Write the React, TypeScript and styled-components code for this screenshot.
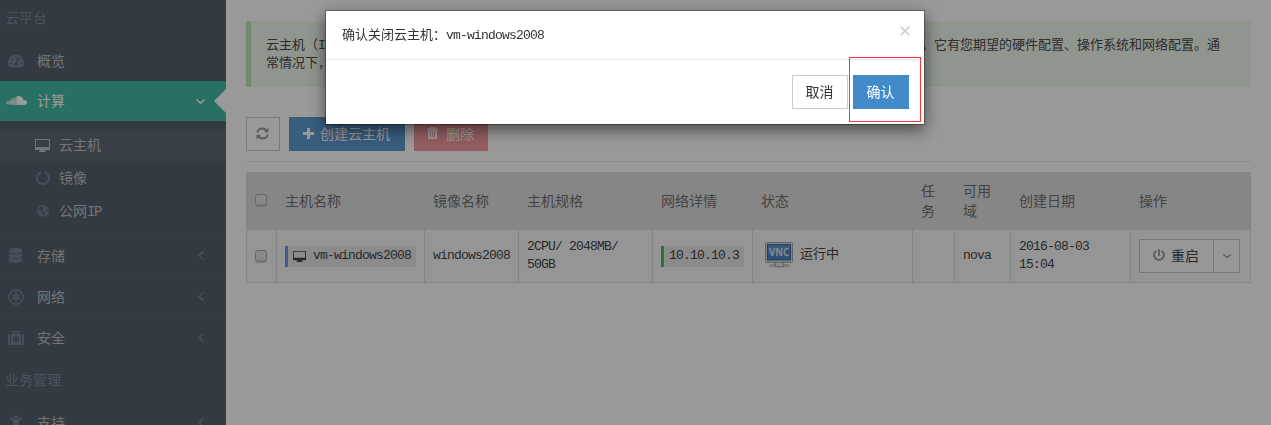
import React from 'react';
import styled, { createGlobalStyle, css } from 'styled-components';
import {
  FaTachometerAlt, FaSoundcloud, FaDatabase, FaGlobeAmericas,
  FaPowerOff, FaChild,
} from 'react-icons/fa';

const Global = createGlobalStyle`
  * { box-sizing: border-box; }
  html, body { margin: 0; height: 100%; overflow: hidden; background: #fff; }
  body { font-family: "Noto Sans CJK SC", sans-serif; font-size: 13px; color: #555; }
  svg { display: block; flex: none; }
`;

const Page = styled.div`
  display: flex;
  width: 1271px;
  height: 425px;
  overflow: hidden;
`;

/* Half-width characters sit on a 7px grid */
const Mono = styled.span<{ $large?: boolean }>`
  font-family: "Liberation Mono", monospace;
  font-size: ${p => (p.$large ? 14 : 13)}px;
  letter-spacing: ${p => (p.$large ? -1.4 : -0.8)}px;
`;

const Sidebar = styled.nav`
  width: 226px;
  flex: none;
  background: #57616e;
  color: #bdc1c9;
  font-size: 14px;
`;
const Section = styled.div<{ $h: number; $bottom: number }>`
  height: ${p => p.$h}px;
  padding: 0 0 ${p => p.$bottom}px 5px;
  display: flex;
  align-items: center;
  color: #7f899a;
`;
const Label = styled.span`
  padding-bottom: 2px;
`;
const Item = styled.div<{ $active?: boolean; $line?: boolean }>`
  position: relative;
  height: ${p => (p.$line ? 41 : 40)}px;
  display: grid;
  grid-template-columns: 24px 1fr 16px;
  column-gap: 7px;
  align-items: center;
  padding: 0 14px 0 6px;
  color: ${p => (p.$active ? '#fff' : '#bdc1c9')};
  ${p => p.$line && css`border-top: 1px solid #606a77;`}
  ${p => p.$active && css`
    background: #45bba7;
    &::after {
      content: '';
      position: absolute;
      right: 0;
      top: 8px;
      border: 12px solid transparent;
      border-left: 0;
      border-right: 12px solid #fff;
    }
  `}
`;
const Icon = styled.span<{ $wide?: boolean }>`
  display: flex;
  padding-left: ${p => (p.$wide ? 0 : 2)}px;
  padding-bottom: ${p => (p.$wide ? 2 : 1)}px;
  color: ${p => (p.$wide ? '#fff' : '#788496')};
`;
const Sub = styled.div`
  height: 114px;
  padding-top: 8px;
`;
const SubItem = styled.div<{ $active?: boolean }>`
  height: ${p => (p.$active ? 32 : 33)}px;
  display: grid;
  grid-template-columns: 16px 1fr;
  column-gap: 8px;
  align-items: center;
  padding-left: 35px;
  background: ${p => (p.$active ? '#606a76' : 'transparent')};
  & > svg { color: ${p => (p.$active ? '#bdc1c9' : '#788496')}; }
`;

const Main = styled.main`
  flex: 1;
  padding: 21px 20px 0;
`;
const Notice = styled.div`
  height: 66px;
  padding: 14px 20px 15px 15px;
  border-left: 5px solid #c3e6b1;
  background: #f0f8ec;
  color: #4c4c4c;
  line-height: 18px;
  white-space: nowrap;
`;
const Lead = styled.span`
  display: inline-block;
  width: 655px;
  height: 18px;
  vertical-align: top;
`;
const Toolbar = styled.div`
  display: flex;
  gap: 9px;
  margin-top: 30px;
  padding-bottom: 10px;
  border-bottom: 1px solid #eaeaea;
`;
const Button = styled.button<{ $kind?: 'primary' | 'danger'; $w: number }>`
  width: ${p => p.$w}px;
  height: 34px;
  padding: 0 1px 2px 0;
  display: flex;
  align-items: center;
  justify-content: center;
  gap: 6px;
  font: 14px "Noto Sans CJK SC", sans-serif;
  border: 1px solid #ccc;
  background: #fff;
  color: #333;
  ${p => p.$kind === 'primary' && css`background: #428bca; border-color: #428bca; color: #fff;`}
  ${p => p.$kind === 'danger' && css`background: #f79ba0; border-color: #f79ba0; color: #fff; gap: 8px;`}
`;
const Create = styled(Button)`
  background: #5f9bd1;
  border-color: #5f9bd1;
`;

const Table = styled.div`
  margin-top: 10px;
  border: 1px solid #ddd;
  border-right: 0;
`;
const Row = styled.div<{ $head?: boolean }>`
  display: grid;
  grid-template-columns: 30px 148px 94px 134px 100px 160px 42px 56px 120px 120px;
  height: ${p => (p.$head ? 57 : 52)}px;
  line-height: ${p => (p.$head ? 20 : 18)}px;
  font-size: ${p => (p.$head ? 14 : 13)}px;
  background: ${p => (p.$head ? '#e0e0e0' : '#f9f9f9')};
  color: ${p => (p.$head ? '#707070' : '#444')};
  & > div { border-right: 1px solid ${p => (p.$head ? '#e0e0e0' : '#ddd')}; }
`;
const Cell = styled.div<{ $head?: boolean }>`
  display: flex;
  align-items: center;
  padding: 0 8px ${p => (p.$head ? 3 : 0)}px;
  min-width: 0;
`;
const Check = styled.span`
  width: 12px;
  height: 12px;
  border: 1px solid #aaa;
  border-radius: 3px;
  background: linear-gradient(#ececec, #dcdcdc);
  box-shadow: 0 1px 1px #ccc;
`;
const Tag = styled.span<{ $color: string }>`
  height: 21px;
  display: flex;
  align-items: center;
  gap: 7px;
  padding: 0 5px;
  white-space: nowrap;
  border-left: 3px solid ${p => p.$color};
  background: #e8e8e8;
`;
const State = styled.span`
  display: flex;
  align-items: center;
  gap: 6px;
  padding: 0 0 3px 4px;
`;
const StateText = styled.span`
  padding-bottom: 3px;
`;
const Split = styled.div`
  display: flex;
  width: 101px;
  height: 34px;
  border: 1px solid #c8c8c8;
  background: #fcfcfc;
  color: #444;
  font-size: 14px;
`;
const SplitMain = styled.span`
  flex: 1;
  display: flex;
  align-items: center;
  justify-content: center;
  gap: 6px;
  padding: 0 1px 2px 0;
  & > svg { color: #999; }
`;
const SplitArrow = styled.span`
  width: 26px;
  display: grid;
  place-items: center;
  border-left: 1px solid #c8c8c8;
  color: #999;
`;

const Backdrop = styled.div`
  position: fixed;
  inset: 0;
  background: rgba(0, 0, 0, 0.4);
`;
const Dialog = styled.section`
  position: fixed;
  left: 325px;
  top: 10px;
  width: 600px;
  height: 115px;
  border: 1px solid rgba(0, 0, 0, 0.3);
  background: #fff;
  background-clip: padding-box;
  box-shadow: 0 5px 15px rgba(0, 0, 0, 0.5);
  color: #333;
`;
const DialogHead = styled.header`
  height: 49px;
  padding: 0 14px 0 16px;
  display: flex;
  justify-content: space-between;
  border-bottom: 1px solid #e5e5e5;
  line-height: 45px;
`;
const Close = styled.span`
  display: flex;
  padding-top: 15px;
  height: 26px;
  color: #ccc;
`;
const DialogFoot = styled.footer`
  display: flex;
  justify-content: flex-end;
  gap: 5px;
  padding: 15px;
`;
const Highlight = styled.div`
  position: absolute;
  left: 523px;
  top: 46px;
  width: 72px;
  height: 65px;
  border: 1px solid #f33;
`;

const Monitor = ({ w = 15 }: { w?: number }) => (
  <svg width={w} height={w === 15 ? 13 : 11} viewBox="0 0 15 13" preserveAspectRatio="none" fill="currentColor">
    <path fillRule="evenodd" d="M0 0h15v11h-5v1h1v1H4v-1h1v-1H0zM1 1v7h13V1z" />
  </svg>
);
const Ring = () => (
  <svg width="15" height="14" viewBox="-1 0 15 14" fill="none" stroke="currentColor" strokeWidth="2">
    <path d="M8.800 1.300A6 6 0 1 1 5.200 1.300" />
  </svg>
);
const Hub = () => (
  <svg width="16" height="16" viewBox="0 0 16 16" fill="none" stroke="currentColor">
    <circle cx="8" cy="8" r="7.100" strokeWidth="1.600" />
    <path strokeWidth="2" d="M8 3v10M3.800 5.500l8.400 5M3.800 10.500l8.400-5" />
  </svg>
);
const Medkit = () => (
  <svg width="16" height="14" viewBox="0 0 16 14" fill="currentColor">
    <path d="M0 4.500Q0 3 1.500 3H2v11h-.5Q0 14 0 12.500zM16 4.500Q16 3 14.500 3H14v11h.5q1.500 0 1.500-1.500z" />
    <path fillRule="evenodd" d="M3 3h2V0h6v3h2v11H3zM6.200 1.200V3h3.600V1.200zM7 5v2H5v2.500h2v2h2v-2h2V7H9V5z" />
  </svg>
);
const Refresh = () => (
  <svg width="13" height="13" viewBox="0 0 13 13" fill="none" stroke="#999" strokeWidth="2">
    <path d="M1.200 5.600C2 2.800 4 1.600 6.500 1.600c1.700 0 3 .7 4 1.900M11.800 7.400C11 10.200 9 11.400 6.500 11.400c-1.700 0-3-.7-4-1.900" />
    <path d="M12.500.8v4.400H8zM.5 12.200V7.800H5z" fill="#999" stroke="none" />
  </svg>
);
const Plus = () => (
  <svg width="11" height="11" viewBox="0 0 11 11" fill="currentColor">
    <path d="M4 0h3v4h4v3H7v4H4V7H0V4h4z" />
  </svg>
);
const Trash = () => (
  <svg width="11" height="12" viewBox="0 0 11 12" fill="currentColor">
    <path fillRule="evenodd" d="M3 0h5v1.500h3V3H0V1.500h3zM4.200 1v.5h2.600V1zM1 3.600h9V12H1zM2.900 4.800v5.700h.9V4.800zM5.050 4.800v5.700h.9V4.800zM7.200 4.800v5.700h.9V4.800z" />
  </svg>
);
const Chevron = ({ left, size = 9 }: { left?: boolean; size?: number }) => (
  <svg width={left ? 6 : size} height={left ? 9 : size * 5 / 9} viewBox={left ? '0 0 6 9' : '0 0 9 5'} fill="none" stroke="currentColor" strokeWidth="1.500">
    <path d={left ? 'M5.400.5l-4.400 4 4.400 4' : 'M.5.500l4 3.700 4-3.700'} />
  </svg>
);
const Vnc = () => (
  <svg width="29" height="26" viewBox="0 0 29 26">
    <ellipse cx="14.500" cy="23.500" rx="11" ry="2" fill="#ccc" />
    <path d="M10.500 20h8v4.500h-8z" fill="#e6e6e6" stroke="#aaa" />
    <rect x=".5" y=".5" width="27" height="20" rx="1" fill="#ddd" stroke="#a5a5a5" />
    <rect x="2.500" y="2.500" width="23" height="15.500" fill="#4a86cc" stroke="#3c6ca8" />
    <path d="M3 3h22v4Q14 8 3 13z" fill="#73a6df" opacity=".5" />
    <text x="14" y="14" textAnchor="middle" textLength="20" lengthAdjust="spacingAndGlyphs" fontFamily="Open Sans, sans-serif" fontSize="10.500" fontWeight="700" fill="#e4e4e4">VNC</text>
  </svg>
);

const nav = [
  { icon: <FaDatabase size={15} />, label: '存储' },
  { icon: <Hub />, label: '网络' },
  { icon: <Medkit />, label: '安全' },
];
const heads = ['主机名称', '镜像名称', '主机规格', '网络详情', '状态', '任务', '可用域', '创建日期', '操作'];

export default function App() {
  return (
    <>
      <Global />
      <Page>
        <Sidebar>
          <Section $h={41} $bottom={7}>云平台</Section>
          <Item><Icon><FaTachometerAlt size={16} /></Icon><Label>概览</Label></Item>
          <Item $active>
            <Icon $wide><FaSoundcloud size={21} /></Icon><Label>计算</Label><Chevron />
          </Item>
          <Sub>
            <SubItem $active><Monitor /><Label>云主机</Label></SubItem>
            <SubItem><Ring /><Label>镜像</Label></SubItem>
            <SubItem><FaGlobeAmericas size={12} style={{ marginLeft: 2 }} /><Label>公网<Mono $large>IP</Mono></Label></SubItem>
          </Sub>
          {nav.map(n => (
            <Item $line key={n.label}><Icon>{n.icon}</Icon><Label>{n.label}</Label><Icon><Chevron left /></Icon></Item>
          ))}
          <Section $h={45} $bottom={3}>业务管理</Section>
          <Item><Icon><FaChild size={16} /></Icon><Label>支持</Label><Icon><Chevron left /></Icon></Item>
        </Sidebar>
        <Main>
          <Notice>
            <Lead>云主机（<Mono>I</Mono></Lead>，它有您期望的硬件配置、操作系统和网络配置。通
            <br />常情况下，
          </Notice>
          <Toolbar>
            <Button $w={34}><Refresh /></Button>
            <Create $w={116} $kind="primary"><Plus />创建云主机</Create>
            <Button $w={74} $kind="danger"><Trash />删除</Button>
          </Toolbar>
          <Table>
            <Row $head>
              <Cell $head><Check /></Cell>
              {heads.map(h => <Cell $head key={h}>{h}</Cell>)}
            </Row>
            <Row>
              <Cell><Check /></Cell>
              <Cell><Tag $color="#6a9ae8"><Monitor w={13} /><Mono>vm-windows2008</Mono></Tag></Cell>
              <Cell><Mono>windows2008</Mono></Cell>
              <Cell><Mono>2CPU/ 2048MB/<br />50GB</Mono></Cell>
              <Cell><Tag $color="#4fb866"><Mono>10.10.10.3</Mono></Tag></Cell>
              <Cell><State><Vnc /><StateText>运行中</StateText></State></Cell>
              <Cell />
              <Cell><Mono>nova</Mono></Cell>
              <Cell><Mono>2016-08-03<br />15:04</Mono></Cell>
              <Cell>
                <Split>
                  <SplitMain><FaPowerOff size={12} />重启</SplitMain>
                  <SplitArrow><Chevron size={8} /></SplitArrow>
                </Split>
              </Cell>
            </Row>
          </Table>
        </Main>
      </Page>
      <Backdrop />
      <Dialog>
        <DialogHead>
          <span>确认关闭云主机：<Mono>vm-windows2008</Mono></span>
          <Close>
            <svg width="10" height="10" viewBox="0 0 10 10" stroke="currentColor" strokeWidth="1.600"><path d="M.7.7l8.600 8.600M9.300.7L.7 9.300" /></svg>
          </Close>
        </DialogHead>
        <DialogFoot>
          <Button $w={56}>取消</Button>
          <Button $w={56} $kind="primary">确认</Button>
        </DialogFoot>
        <Highlight />
      </Dialog>
    </>
  );
}
